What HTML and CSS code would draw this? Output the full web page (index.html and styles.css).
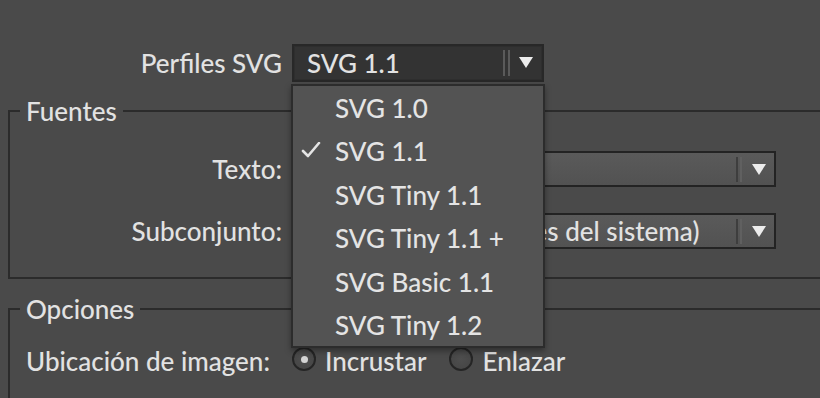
FILE: index.html
```html
<!DOCTYPE html>
<html lang="es">
<head>
  <meta charset="UTF-8" />
  <title>Opciones SVG</title>
  <link rel="stylesheet" href="styles.css">
</head>
<body>
  <div class="panel">
    <div class="row top-row">
      <label class="field-label">Perfiles SVG</label>
      <div class="select select-dark">
        <span class="value">SVG 1.1</span>
        <span class="sep"></span>
        <span class="arrow"></span>
      </div>
    </div>

    <fieldset class="group fonts">
      <legend>Fuentes</legend>
      <div class="row">
        <label class="field-label">Texto:</label>
        <div class="select select-light">
          <span class="value">SVG</span>
          <span class="sep"></span>
          <span class="arrow"></span>
        </div>
      </div>
      <div class="row">
        <label class="field-label">Subconjunto:</label>
        <div class="select select-light">
          <span class="value">Ninguno (usar fuentes del sistema)</span>
          <span class="sep"></span>
          <span class="arrow"></span>
        </div>
      </div>
    </fieldset>

    <fieldset class="group options">
      <legend>Opciones</legend>
      <div class="row radio-row">
        <label class="field-label left">Ubicación de imagen:</label>
        <span class="radio checked"></span>
        <span class="radio-text">Incrustar</span>
        <span class="radio"></span>
        <span class="radio-text">Enlazar</span>
      </div>
    </fieldset>
  </div>

  <ul class="menu">
    <li>SVG 1.0</li>
    <li class="selected">
      <svg class="check" width="20" height="16" viewBox="0 0 20 16">
        <path d="M2 9 L7 14 L18 1" fill="none" stroke="#e4e4e4" stroke-width="2.6" stroke-linecap="round" stroke-linejoin="round"/>
      </svg>
      SVG 1.1
    </li>
    <li>SVG Tiny 1.1</li>
    <li>SVG Tiny 1.1 +</li>
    <li>SVG Basic 1.1</li>
    <li>SVG Tiny 1.2</li>
  </ul>
</body>
</html>
```

FILE: styles.css
```css
* {
  box-sizing: border-box;
}

html, body {
  margin: 0;
  height: 398px;
  overflow: hidden;
}

body {
  background: #4a4a4a;
  color: #e2e2e2;
  font-family: Lato, "Open Sans", sans-serif;
  font-size: 26px;
  font-weight: 500;
  position: relative;
}

.panel {
  padding-top: 44px;
}

.row {
  display: flex;
  align-items: center;
}

.field-label {
  flex: none;
  text-align: right;
  padding-right: 10px;
  white-space: nowrap;
}

.top-row .field-label {
  width: 292px;
}

/* selects */
.select {
  display: flex;
  align-items: center;
  padding-left: 13px;
  overflow: hidden;
  white-space: nowrap;
}

.select .value {
  flex: 1;
  overflow: hidden;
}

.select .sep {
  flex: none;
  width: 7px;
  border-left: 2px solid #5a5a5a;
  border-right: 2px solid #5a5a5a;
}

.select .arrow {
  flex: none;
  width: 0;
  height: 0;
  border-left: 7px solid transparent;
  border-right: 7px solid transparent;
  border-top: 11px solid #ececec;
}

.select-dark {
  width: 252px;
  height: 38px;
  background: #333333;
  border: 2px solid #282828;
  box-shadow: inset 0 0 0 1px #2e2e2e;
}

.select-dark .sep {
  height: 26px;
}

.select-dark .arrow {
  margin: 0 9px 2px 9px;
}

.select-light {
  width: 484px;
  height: 36px;
  background: linear-gradient(#5a5a5a, #525252);
  border: 2px solid #232323;
}

.select-light .sep {
  height: 25px;
  width: 6px;
  border-left-color: #3e3e3e;
  border-right-color: #606060;
}

.select-light .arrow {
  margin: 0 8px 0 10px;
}

/* groups */
.group {
  margin: 14px -40px 0 8px;
  padding: 0;
  border: 2px solid #2b2b2b;
  min-width: 0;
}

.group legend {
  margin-left: 10px;
  padding: 0 6px;
  line-height: 30px;
}

.group .field-label {
  width: 282px;
}

.fonts {
  padding: 25px 0 28px;
}

.fonts .row + .row {
  margin-top: 26px;
}

.options {
  margin-top: 15px;
  padding: 19px 0 20px;
}

.radio-row {
  height: 36px;
}

.field-label.left {
  text-align: left;
  padding-left: 16px;
}

.radio {
  flex: none;
  width: 24px;
  height: 24px;
  border-radius: 50%;
  border: 2px solid #252525;
  background: radial-gradient(circle, #4e4e4e, #444444);
  display: flex;
  align-items: center;
  justify-content: center;
  margin-right: 9px;
  margin-top: -4px;
}

.radio.checked::after {
  content: "";
  width: 7px;
  height: 7px;
  border-radius: 50%;
  background: #d4d4d4;
}

.radio-text {
  margin-right: 23px;
}

/* dropdown menu */
.menu {
  position: absolute;
  left: 291px;
  top: 84px;
  width: 254px;
  margin: 0;
  padding: 0;
  list-style: none;
  background: #535353;
  border: 2px solid #2c2c2c;
  box-shadow: 0 3px 6px rgba(0, 0, 0, 0.35);
  color: #e4e4e4;
}

.menu li {
  position: relative;
  height: 43.4px;
  line-height: 45px;
  padding-left: 42px;
}

.menu .check {
  position: absolute;
  left: 8px;
  top: 13px;
}
```
